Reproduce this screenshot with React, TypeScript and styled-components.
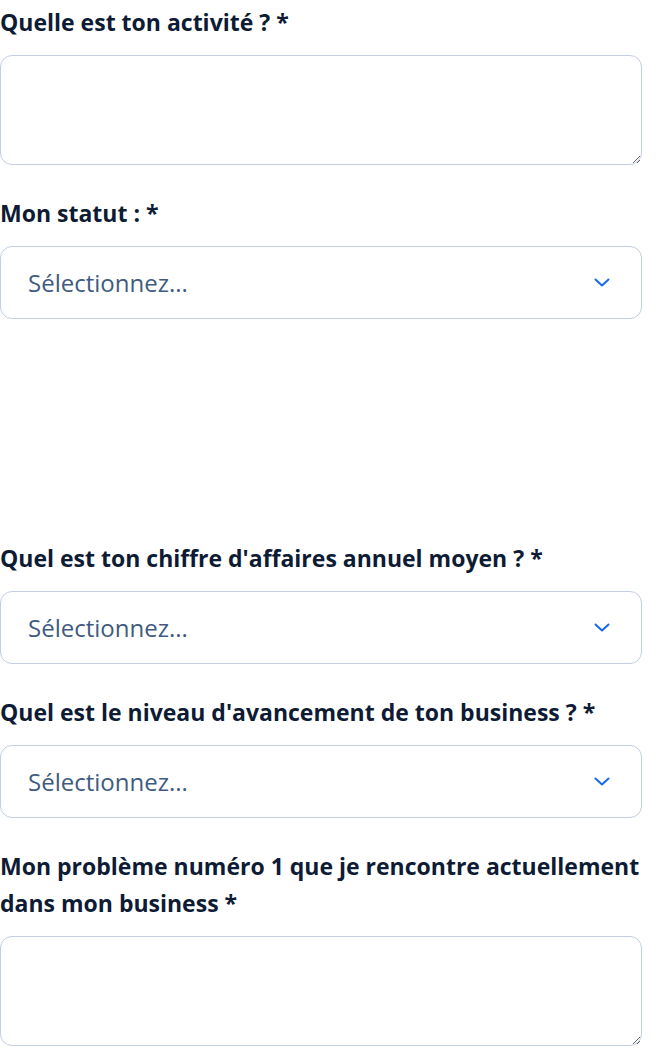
import styled, { createGlobalStyle } from 'styled-components';

const GlobalStyle = createGlobalStyle`
  html, body {
    margin: 0;
    padding: 0;
    background: #ffffff;
  }
  body {
    font-family: 'Open Sans', 'Liberation Sans', sans-serif;
    color: #0d1b34;
  }
`;

function Chevron() {
  return (
    <ChevronIcon width="16" height="9" viewBox="0 0 16 9" fill="none">
      <path d="M1.5 1.5l6.5 6 6.5-6" stroke="currentColor" strokeWidth="2" strokeLinecap="round" strokeLinejoin="round" />
    </ChevronIcon>
  );
}

function SelectField({ label }: { label: string }) {
  return (
    <Field>
      <Label>{label}</Label>
      <SelectBox>
        <Placeholder>Sélectionnez...</Placeholder>
        <Chevron />
      </SelectBox>
    </Field>
  );
}

function TextField({ label }: { label: string }) {
  return (
    <Field>
      <Label>{label}</Label>
      <TextArea />
    </Field>
  );
}

export default function App() {
  return (
    <>
      <GlobalStyle />
      <Form>
        <TextField label="Quelle est ton activité ? *" />
        <SelectField label="Mon statut : *" />
        <Spacer />
        <SelectField label="Quel est ton chiffre d'affaires annuel moyen ? *" />
        <SelectField label="Quel est le niveau d'avancement de ton business ? *" />
        <TextField label="Mon problème numéro 1 que je rencontre actuellement dans mon business *" />
      </Form>
    </>
  );
}

const Form = styled.form`
  display: flex;
  flex-direction: column;
  gap: 30px;
  width: 642px;
  padding-top: 4px;
`;

const Field = styled.div`
  display: flex;
  flex-direction: column;
`;

const Spacer = styled.div`
  height: 161px;
`;

const Label = styled.label`
  font-size: 23px;
  font-weight: 700;
  line-height: 37px;
  color: #0d1b34;
  margin-bottom: 14px;
`;

const TextArea = styled.textarea`
  box-sizing: border-box;
  height: 110px;
  width: 100%;
  border: 1px solid #c3cee0;
  border-radius: 12px;
  resize: vertical;
  font: inherit;
  outline: none;
  margin: 0;
  display: block;
`;

const SelectBox = styled.div`
  box-sizing: border-box;
  height: 73px;
  display: flex;
  align-items: center;
  justify-content: space-between;
  padding: 0 31px 0 27px;
  border: 1px solid #c3cee0;
  border-radius: 12px;
`;

const Placeholder = styled.span`
  font-size: 24px;
  color: #3f5b7f;
`;

const ChevronIcon = styled.svg`
  color: #1769f2;
`;
